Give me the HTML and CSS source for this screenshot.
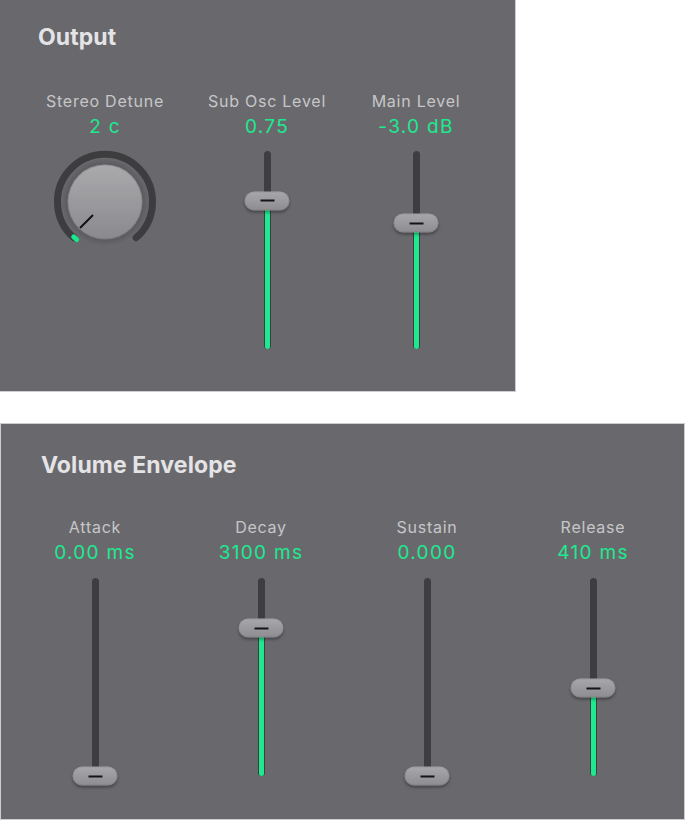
FILE: index.html
```html
<!DOCTYPE html>
<html>
<head>
    <meta charset="UTF-8">
    <title>Synth Output</title>
    <link rel="stylesheet" href="styles.css">
</head>
<body>
    <!-- Output section -->
    <section class="panel output">
        <h2 class="panel-title">Output</h2>
        <div class="controls">
            <div class="control">
                <div class="label">Stereo Detune</div>
                <div class="value">2 c</div>
                <svg class="knob" width="104" height="104" viewBox="0 0 104 104">
                    <defs>
                        <linearGradient id="knobFace" x1="0" y1="0" x2="0" y2="1">
                            <stop offset="0" stop-color="#aaaaad"/>
                            <stop offset="1" stop-color="#8a8a8e"/>
                        </linearGradient>
                        <radialGradient id="knobHalo" cx="0.5" cy="0.5" r="0.5">
                            <stop offset="0.8" stop-color="#4e4e51"/>
                            <stop offset="1" stop-color="#4e4e51" stop-opacity="0"/>
                        </radialGradient>
                    </defs>
                    <path d="M20.9 87.7 A47.5 47.5 0 1 1 83.1 87.7" fill="none" stroke="#3d3d40" stroke-width="7" stroke-linecap="round"/>
                    <circle cx="52" cy="52" r="44" fill="url(#knobHalo)" opacity="0.7"/>
                    <circle cx="52" cy="52" r="37.5" fill="url(#knobFace)"/>
                    <circle cx="52" cy="52" r="37" fill="none" stroke="rgba(0,0,0,0.12)" stroke-width="1"/>
                    <path d="M23.6 89.5 L20.7 86.9" stroke="#17e88e" stroke-width="5" stroke-linecap="round"/>
                    <line x1="40" y1="65" x2="27" y2="78" stroke="#111" stroke-width="2"/>
                </svg>
            </div>
            <div class="control">
                <div class="label">Sub Osc Level</div>
                <div class="value">0.75</div>
                <div class="slider" style="--v: 0.75">
                    <div class="fill"></div>
                    <div class="thumb"></div>
                </div>
            </div>
            <div class="control">
                <div class="label">Main Level</div>
                <div class="value">-3.0 dB</div>
                <div class="slider" style="--v: 0.636">
                    <div class="fill"></div>
                    <div class="thumb"></div>
                </div>
            </div>
        </div>
    </section>

    <!-- Volume envelope section -->
    <section class="panel envelope">
        <h2 class="panel-title">Volume Envelope</h2>
        <div class="controls">
            <div class="control">
                <div class="label">Attack</div>
                <div class="value">0.00 ms</div>
                <div class="slider" style="--v: 0">
                    <div class="fill"></div>
                    <div class="thumb"></div>
                </div>
            </div>
            <div class="control">
                <div class="label">Decay</div>
                <div class="value">3100 ms</div>
                <div class="slider" style="--v: 0.747">
                    <div class="fill"></div>
                    <div class="thumb"></div>
                </div>
            </div>
            <div class="control">
                <div class="label">Sustain</div>
                <div class="value">0.000</div>
                <div class="slider" style="--v: 0">
                    <div class="fill"></div>
                    <div class="thumb"></div>
                </div>
            </div>
            <div class="control">
                <div class="label">Release</div>
                <div class="value">410 ms</div>
                <div class="slider" style="--v: 0.444">
                    <div class="fill"></div>
                    <div class="thumb"></div>
                </div>
            </div>
        </div>
    </section>
</body>
</html>
```

FILE: styles.css
```css
:root {
    --panel: #69696d;
    --panel-edge: #cdcdcf;
    --title: #e4e4e6;
    --label: #c6c6c8;
    --green: #1ee98f;
    --track: #3e3e41;
}

body {
    margin: 0;
    background: #ffffff;
    font-family: 'Inter', 'Liberation Sans', sans-serif;
}

/* panels */
.panel {
    background: var(--panel);
    box-sizing: border-box;
}

.output {
    width: 516px;
    height: 392px;
    padding: 23px 0 0 0;
    border-right: 1px solid var(--panel-edge);
    border-bottom: 1px solid var(--panel-edge);
}

.envelope {
    width: 685px;
    height: 397px;
    margin-top: 31px;
    padding: 27px 0 0 0;
    border: 1px solid var(--panel-edge);
}

.panel-title {
    margin: 0;
    font-size: 23px;
    line-height: 28px;
    font-weight: 700;
    color: var(--title);
    letter-spacing: 0.1px;
}

.output .panel-title {
    padding-left: 38px;
}

.envelope .panel-title {
    padding-left: 40px;
}

/* control columns */
.controls {
    display: grid;
}

.output .controls {
    grid-template-columns: 150px 174px 124px;
    padding-left: 30px;
    margin-top: 40px;
}

.envelope .controls {
    grid-template-columns: repeat(4, 166px);
    padding-left: 11px;
    margin-top: 38px;
}

.control {
    display: flex;
    flex-direction: column;
    align-items: center;
}

.label {
    font-size: 16px;
    line-height: 20px;
    color: var(--label);
    letter-spacing: 0.75px;
    white-space: nowrap;
}

.value {
    margin-top: 5px;
    font-size: 19px;
    line-height: 22px;
    color: var(--green);
    letter-spacing: 1.3px;
    white-space: nowrap;
}

.knob {
    display: block;
    margin-top: 12px;
}

/* vertical slider */
.slider {
    position: relative;
    width: 7px;
    height: 198px;
    margin-top: 13px;
    background: var(--track);
    border-radius: 4px;
}

.envelope .slider {
    margin-top: 14px;
}

.fill {
    position: absolute;
    left: 1px;
    bottom: 0;
    width: 5px;
    height: calc(var(--v) * 100%);
    background: var(--green);
    border-radius: 3px;
}

.thumb {
    position: absolute;
    left: 50%;
    top: calc((1 - var(--v)) * 100%);
    width: 45px;
    height: 19px;
    transform: translate(-50%, -50%);
    border-radius: 10px;
    background: linear-gradient(#a8a8ac, #8d8d91);
    box-shadow: 0 2px 3px rgba(0,0,0,0.35), inset 0 0 0 1px rgba(0,0,0,0.08);
}

.thumb::after {
    content: '';
    position: absolute;
    left: 50%;
    top: 50%;
    width: 14px;
    height: 2px;
    transform: translate(-50%, -50%);
    background: #151515;
}
```
